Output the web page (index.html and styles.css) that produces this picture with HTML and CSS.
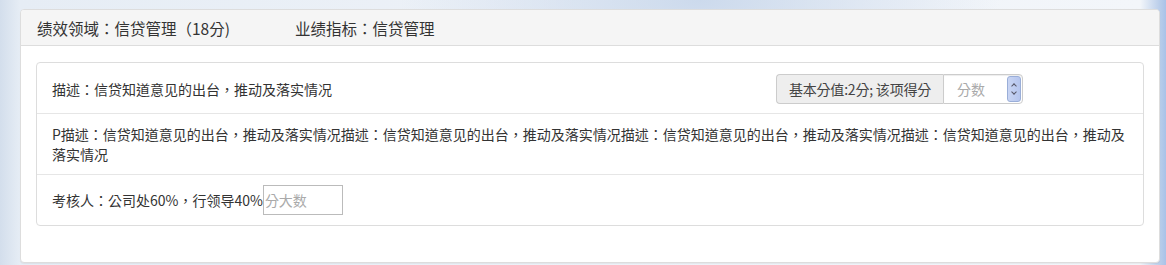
FILE: index.html
```html
<!DOCTYPE html>
<html lang="zh-CN">
<head>
<meta charset="utf-8">
<title>绩效考核</title>
<link rel="stylesheet" href="styles.css">
</head>
<body>
<div class="page">
  <div class="panel outer">
    <div class="panel-heading">
      <span class="field">绩效领域：信贷管理（18分)</span>
      <span class="field">业绩指标：信贷管理</span>
    </div>
    <div class="panel-body">
      <div class="panel inner">
        <div class="row row-top">
          <div class="desc">描述：信贷知道意见的出台，推动及落实情况</div>
          <div class="input-group">
            <span class="addon">基本分值:2分; 该项得分</span>
            <span class="num-wrap">
              <input class="num" type="text" placeholder="分数">
              <span class="spinner"><span class="up"></span><span class="down"></span></span>
            </span>
          </div>
        </div>
        <div class="row row-text">P描述：信贷知道意见的出台，推动及落实情况描述：信贷知道意见的出台，推动及落实情况描述：信贷知道意见的出台，推动及落实情况描述：信贷知道意见的出台，推动及落实情况</div>
        <div class="row row-bottom">
          <span>考核人：公司处60%，行领导40%</span><input class="small" type="text" placeholder="分大数">
        </div>
      </div>
    </div>
  </div>
</div>
</body>
</html>
```
FILE: styles.css
```css
html, body {
  margin: 0;
  padding: 0;
}
body {
  width: 1166px;
  height: 265px;
  overflow: hidden;
  font-family: "Noto Sans CJK TC", "Noto Sans CJK SC", "Noto Sans", sans-serif;
  font-feature-settings: "locl" 0;
  font-size: 14px;
  color: #333;
  background:
    radial-gradient(ellipse 300px 120px at 700px 0px, rgba(200,215,235,0.9), rgba(200,215,235,0) 100%),
    linear-gradient(90deg, #d3deec 0px, #e6edf5 20px, #eef2f8 600px, #f3f6fa 1140px, #b9cdea 1160px, #a9c2e8 1166px);
}
.page {
  padding: 9px 6px 0 20px;
}
.panel {
  background: #fff;
  border: 1px solid #ddd;
  border-radius: 4px;
  box-sizing: border-box;
}
.outer {
  width: 1140px;
  height: 254px;
  box-shadow: 0 1px 1px rgba(0,0,0,0.05);
}
.panel-heading {
  background: #f5f5f5;
  border-bottom: 1px solid #ddd;
  border-radius: 3px 3px 0 0;
  padding: 7px 16px 6px;
  height: 22px;
  line-height: 22px;
  font-size: 15.5px;
  display: flex;
  gap: 65px;
}
.panel-body {
  padding: 16px 15px 0;
}
.inner {
  width: 1108px;
}
.row {
  padding: 10px 15px;
  line-height: 20px;
  border-top: 1px solid #e6e6e6;
}
.row:first-child {
  border-top: none;
}
.row-top {
  display: flex;
  align-items: center;
  justify-content: space-between;
  padding-right: 120px;
  height: 30px;
}
.desc {
  padding-top: 2px;
}
.input-group {
  display: flex;
  height: 30px;
  margin-top: 2px;
}
.addon {
  display: flex;
  align-items: center;
  justify-content: center;
  white-space: nowrap;
  background: #eee;
  border: 1px solid #ccc;
  border-right: none;
  border-radius: 4px 0 0 4px;
  padding: 0 4px;
  color: #444;
  box-sizing: border-box;
  width: 167px;
  flex-shrink: 0;
  letter-spacing: -0.2px;
}
.num-wrap {
  position: relative;
  display: block;
  width: 80px;
  height: 30px;
}
.num {
  box-sizing: border-box;
  width: 80px;
  height: 30px;
  border: 1px solid #ccc;
  border-radius: 0 4px 4px 0;
  padding: 4px 13px;
  font-family: inherit;
  font-feature-settings: inherit;
  font-size: 14px;
  color: #555;
  outline: none;
  box-shadow: inset 0 1px 1px rgba(0,0,0,0.075);
}
.num::placeholder {
  color: #aaa;
}
.spinner {
  position: absolute;
  right: 2px;
  top: 2px;
  width: 14px;
  height: 26px;
  border: 1px solid #9aaed8;
  border-radius: 3px;
  background: linear-gradient(90deg, #c9d5f3, #b5c5ee);
  box-sizing: border-box;
}
.spinner .up, .spinner .down {
  position: absolute;
  left: 4px;
  width: 3px;
  height: 3px;
  border-left: 1px solid #556;
  border-top: 1px solid #556;
}
.spinner .up {
  top: 7px;
  transform: rotate(45deg);
}
.spinner .down {
  bottom: 7px;
  transform: rotate(225deg);
}
.row-text {
  padding-top: 10px;
  padding-bottom: 10px;
  padding-right: 14px;
}
.row-bottom {
  display: flex;
  align-items: center;
  height: 30px;
}
.small {
  box-sizing: border-box;
  width: 80px;
  height: 30px;
  border: 1px solid #bbb;
  padding: 0 1px;
  font-family: inherit;
  font-feature-settings: inherit;
  font-size: 14px;
  outline: none;
  margin-left: 0;
}
.small::placeholder {
  color: #aaa;
}
```
